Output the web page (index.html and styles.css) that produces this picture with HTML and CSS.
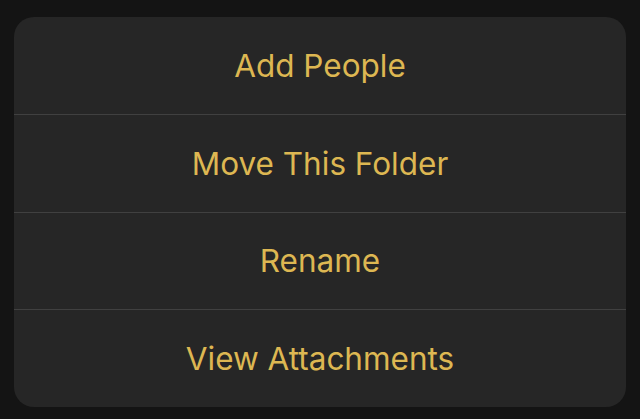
FILE: index.html
```html
<!DOCTYPE html>
<html lang="en">
<head>
    <meta charset="UTF-8">
    <title>Folder actions</title>
    <link rel="stylesheet" href="styles.css">
</head>
<body>
<div class="sheet">
    <div class="action">Add People</div>
    <div class="action">Move This Folder</div>
    <div class="action">Rename</div>
    <div class="action">View Attachments</div>
</div>
</body>
</html>
```

FILE: styles.css
```css
* {
    margin: 0;
    padding: 0;
}

html, body {
    height: 100%;
}

body {
    background-color: #141414;
    font-family: Inter, "Liberation Sans", sans-serif;
    padding: 17px 14px 12px 14px;
    box-sizing: border-box;
}

.sheet {
    height: 390px;
    background-color: #262626;
    border-radius: 20px;
    display: flex;
    flex-direction: column;
    overflow: hidden;
}

.action {
    flex: 1;
    display: flex;
    align-items: center;
    justify-content: center;
    color: #ddb752;
    font-size: 31.5px;
    border-top: 1px solid #404040;
}

.action:first-child {
    border-top: none;
}
```
